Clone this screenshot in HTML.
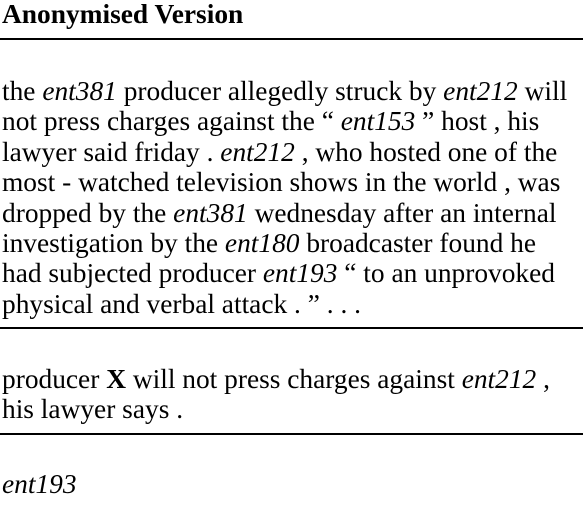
<!DOCTYPE html>
<html><head><meta charset="utf-8"><style>
html,body{margin:0;padding:0;background:#fff;width:587px;height:505px;overflow:hidden}
body{position:relative;font-family:"Liberation Serif",serif;font-size:27.4px;color:#000}
.b{position:absolute;left:2px;line-height:30.4px;white-space:nowrap}
.r{position:absolute;left:0;width:583px;height:2px;background:#000}
i{font-style:italic}
</style></head><body>
<div class="b" style="top:-1px;font-weight:bold">Anonymised Version</div>
<div class="r" style="top:38px"></div>
<div class="b" style="top:76px">the <i>ent381</i> producer allegedly struck by <i>ent212</i> will<br>not press charges against the “ <i>ent153</i> ” host , his<br>lawyer said friday . <i>ent212</i> , who hosted one of the<br>most - watched television shows in the world , was<br>dropped by the <i>ent381</i> wednesday after an internal<br>investigation by the <i>ent180</i> broadcaster found he<br>had subjected producer <i>ent193</i> “ to an unprovoked<br>physical and verbal attack . ” . . .</div>
<div class="r" style="top:327px"></div>
<div class="b" style="top:364px">producer <b>X</b> will not press charges against <i>ent212</i> ,<br>his lawyer says .</div>
<div class="r" style="top:433px"></div>
<div class="b" style="top:469px"><i>ent193</i></div>
</body></html>
